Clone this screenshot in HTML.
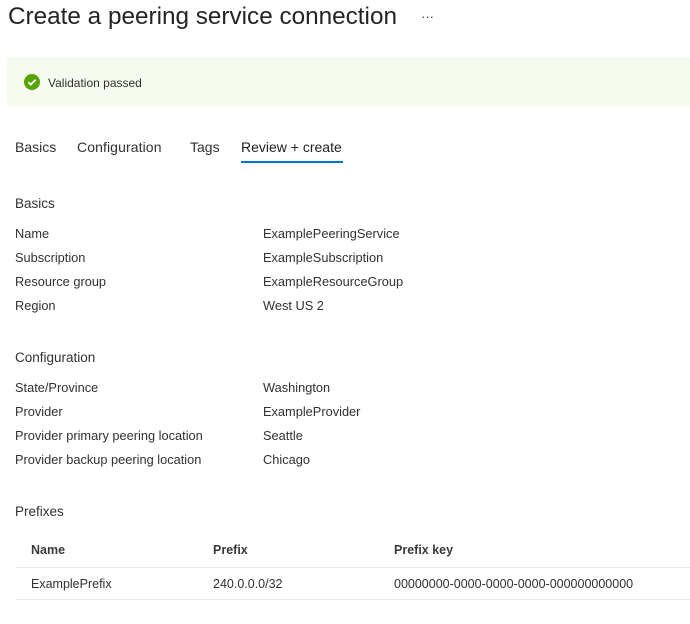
<!DOCTYPE html>
<html><head><style>
body{margin:0;width:690px;height:624px;background:#fff;font-family:"Liberation Sans",sans-serif;color:#323130;position:relative;overflow:hidden}
.a{position:absolute;white-space:nowrap;font-size:12.8px;line-height:16px}
.l{left:15px}.v{left:263px}
</style></head><body>
<div class="a" style="left:8px;top:2px;font-size:24.3px;line-height:30px;color:#252423">Create a peering service connection</div>
<div class="a" style="left:421px;top:9px;font-size:13px;color:#323130">···</div>
<div style="position:absolute;left:7px;top:57px;width:683px;height:49px;background:#f6fbf0"></div>
<svg style="position:absolute;left:24px;top:74px" width="16" height="16" viewBox="0 0 16 16"><circle cx="8" cy="8" r="8" fill="#57a300"/><path d="M4.5 8.3l2.3 2.3 4.7-4.9" stroke="#fff" stroke-width="1.8" fill="none"/></svg>
<div class="a" style="left:48px;top:75px;font-size:12px">Validation passed</div>
<div class="a" style="left:15px;top:139px;font-size:14px">Basics</div>
<div class="a" style="left:77px;top:139px;font-size:14px;letter-spacing:0.1px">Configuration</div>
<div class="a" style="left:190px;top:139px;font-size:14px">Tags</div>
<div class="a" style="left:241px;top:139px;font-size:14px;color:#201f1e">Review + create</div>
<div style="position:absolute;left:241px;top:161px;width:102px;height:2px;background:#0078d4"></div>
<div class="a l" style="top:196px;font-size:13.5px">Basics</div>
<div class="a l" style="top:226px">Name</div><div class="a v" style="top:226px">ExamplePeeringService</div>
<div class="a l" style="top:250px">Subscription</div><div class="a v" style="top:250px">ExampleSubscription</div>
<div class="a l" style="top:274px">Resource group</div><div class="a v" style="top:274px">ExampleResourceGroup</div>
<div class="a l" style="top:298px">Region</div><div class="a v" style="top:298px">West US 2</div>
<div class="a l" style="top:350px;font-size:13.5px">Configuration</div>
<div class="a l" style="top:380px">State/Province</div><div class="a v" style="top:380px">Washington</div>
<div class="a l" style="top:404px">Provider</div><div class="a v" style="top:404px">ExampleProvider</div>
<div class="a l" style="top:428px">Provider primary peering location</div><div class="a v" style="top:428px">Seattle</div>
<div class="a l" style="top:452px">Provider backup peering location</div><div class="a v" style="top:452px">Chicago</div>
<div class="a l" style="top:504px;font-size:13.5px">Prefixes</div>
<div class="a" style="left:31px;top:542px;font-weight:bold;font-size:12.5px;color:#3b3a39">Name</div>
<div class="a" style="left:213px;top:542px;font-weight:bold;font-size:12.5px;color:#3b3a39">Prefix</div>
<div class="a" style="left:394px;top:542px;font-weight:bold;font-size:12.5px;color:#3b3a39">Prefix key</div>
<div style="position:absolute;left:15px;top:567px;width:675px;height:1px;background:#edebe9"></div>
<div class="a" style="left:31px;top:576px;font-size:12.5px">ExamplePrefix</div>
<div class="a" style="left:213px;top:576px;font-size:12.5px">240.0.0.0/32</div>
<div class="a" style="left:394px;top:576px;font-size:12.5px">00000000-0000-0000-0000-000000000000</div>
<div style="position:absolute;left:15px;top:599px;width:675px;height:1px;background:#edebe9"></div>
</body></html>
